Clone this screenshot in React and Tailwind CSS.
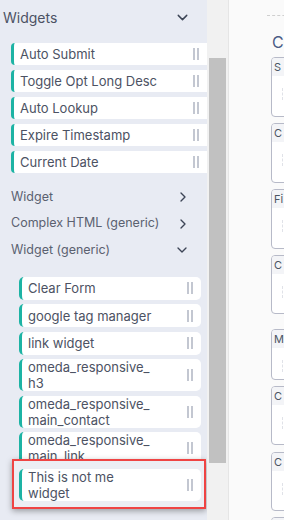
import { ChevronDown, ChevronRight } from "lucide-react";

const topWidgets = ["Auto Submit", "Toggle Opt Long Desc", "Auto Lookup", "Expire Timestamp", "Current Date"];

const genericWidgets = [
  ["Clear Form"],
  ["google tag manager"],
  ["link widget"],
  ["omeda_responsive_", "h3"],
  ["omeda_responsive_", "main_contact"],
  ["omeda_responsive_", "main_link"],
];

// canvas cards peeking in from the right
const cards = [
  { label: "S", cls: "mt-[5px] h-[60px]" },
  { label: "C", cls: "mt-[6px] h-[60px]" },
  { label: "Fi", cls: "mt-[6px] h-[60px]" },
  { label: "C", cls: "mt-[6px] h-[59px]" },
  { label: "M", cls: "mt-[15px] h-[51px]" },
  { label: "C", cls: "mt-[6px] h-[59px]" },
  { label: "C", cls: "mt-[7px] h-[59px]" },
  { label: "C", cls: "mt-[6px] h-[59px]" },
];

function Handle() {
  return (
    <div className="flex shrink-0 gap-[2px]">
      <span className="h-[12px] w-[2px] bg-[#c3c7d1]" />
      <span className="h-[12px] w-[2px] bg-[#c3c7d1]" />
    </div>
  );
}

function Item({ lines, square }) {
  return (
    <div
      className={
        "flex items-center justify-between border-l-[3px] border-[#1db3a4] bg-white pl-[6px] pr-[8px] " +
        (square ? "min-h-[22px] rounded-l-[4px]" : "min-h-[23px] rounded-[5px]")
      }
    >
      <span className="whitespace-nowrap text-[13px] leading-[16px] text-[#4c5263]">
        {lines.map((l, i) => (
          <span key={i} className="block">
            {l}
          </span>
        ))}
      </span>
      <Handle />
    </div>
  );
}

function Section({ title, open }) {
  return (
    <div className="flex h-[26.5px] items-center justify-between pl-[11px] pr-[16px]">
      <span className="text-[12.5px] text-[#5b6170]">{title}</span>
      {open ? (
        <ChevronDown size={16} strokeWidth={2} className="mr-[1px] text-[#3d4556]" />
      ) : (
        <ChevronRight size={16} strokeWidth={2} className="text-[#3d4556]" />
      )}
    </div>
  );
}

export default function App() {
  return (
    <div className="flex h-[520px] w-[284px] overflow-hidden font-['Inter',sans-serif]">
      {/* sidebar */}
      <div className="w-[207px] shrink-0 overflow-hidden bg-[#e8ebf3]">
        <div className="mt-[7px] flex h-[20px] items-center justify-between pl-[3px] pr-[16px]">
          <span className="text-[14px] text-[#4c5263]">Widgets</span>
          <ChevronDown size={17} strokeWidth={2} className="text-[#3d4556]" />
        </div>

        <div className="mt-[16px] flex flex-col gap-[5px] pl-[11px]">
          {topWidgets.map((w) => (
            <Item key={w} lines={[w]} square />
          ))}
        </div>

        <div className="mt-[11px]">
          <Section title="Widget" />
          <Section title="Complex HTML (generic)" />
          <Section title="Widget (generic)" open />
        </div>

        <div className="mt-[13px] flex flex-col gap-[4.5px] pl-[19px] pr-[6px]">
          {genericWidgets.map((l, i) => (
            <Item key={i} lines={l} />
          ))}
          {/* dragged item, highlighted */}
          <div className="relative z-10 -ml-[7px] mt-[-10px] w-[194px] border-2 border-[#ef4444] bg-[#eceef4] pb-[6px] pl-[5px] pr-[3px] pt-[8px] shadow-[0_2px_6px_rgba(0,0,0,0.35)]">
            <Item lines={["This is not me", "widget"]} />
          </div>
        </div>
      </div>

      {/* scrollbar */}
      <div className="w-[21px] shrink-0 bg-[#f1f1f1] pt-[58px]">
        <div className="ml-[2px] h-[405px] w-[17px] bg-[#c1c1c1]" />
      </div>

      {/* canvas */}
      <div className="flex-1 border-l border-[#e5e5e5] bg-[#fafafa] pl-[42px]">
        <div className="ml-[-4px] mt-[15px] border-t border-dashed border-[#cfcfcf]" />
        <div className="mt-[16px] whitespace-nowrap pl-[1px] text-[16px] leading-[20px] text-[#4b5a85]">Co</div>
        {cards.map((c, i) => (
          <div
            key={i}
            className={"w-[40px] overflow-hidden rounded-[4px] border border-[#b7bac8] bg-white " + c.cls}
          >
            <div className="h-[18px] whitespace-nowrap bg-[#f3f4f7] pl-[2px] text-[11px] leading-[18px] text-[#4b5563]">
              {c.label}
            </div>
            <div className="ml-[10px] mt-[12px] h-[12px] w-[3px] border-x border-dashed border-[#e0e2e8]" />
          </div>
        ))}
      </div>
    </div>
  );
}
